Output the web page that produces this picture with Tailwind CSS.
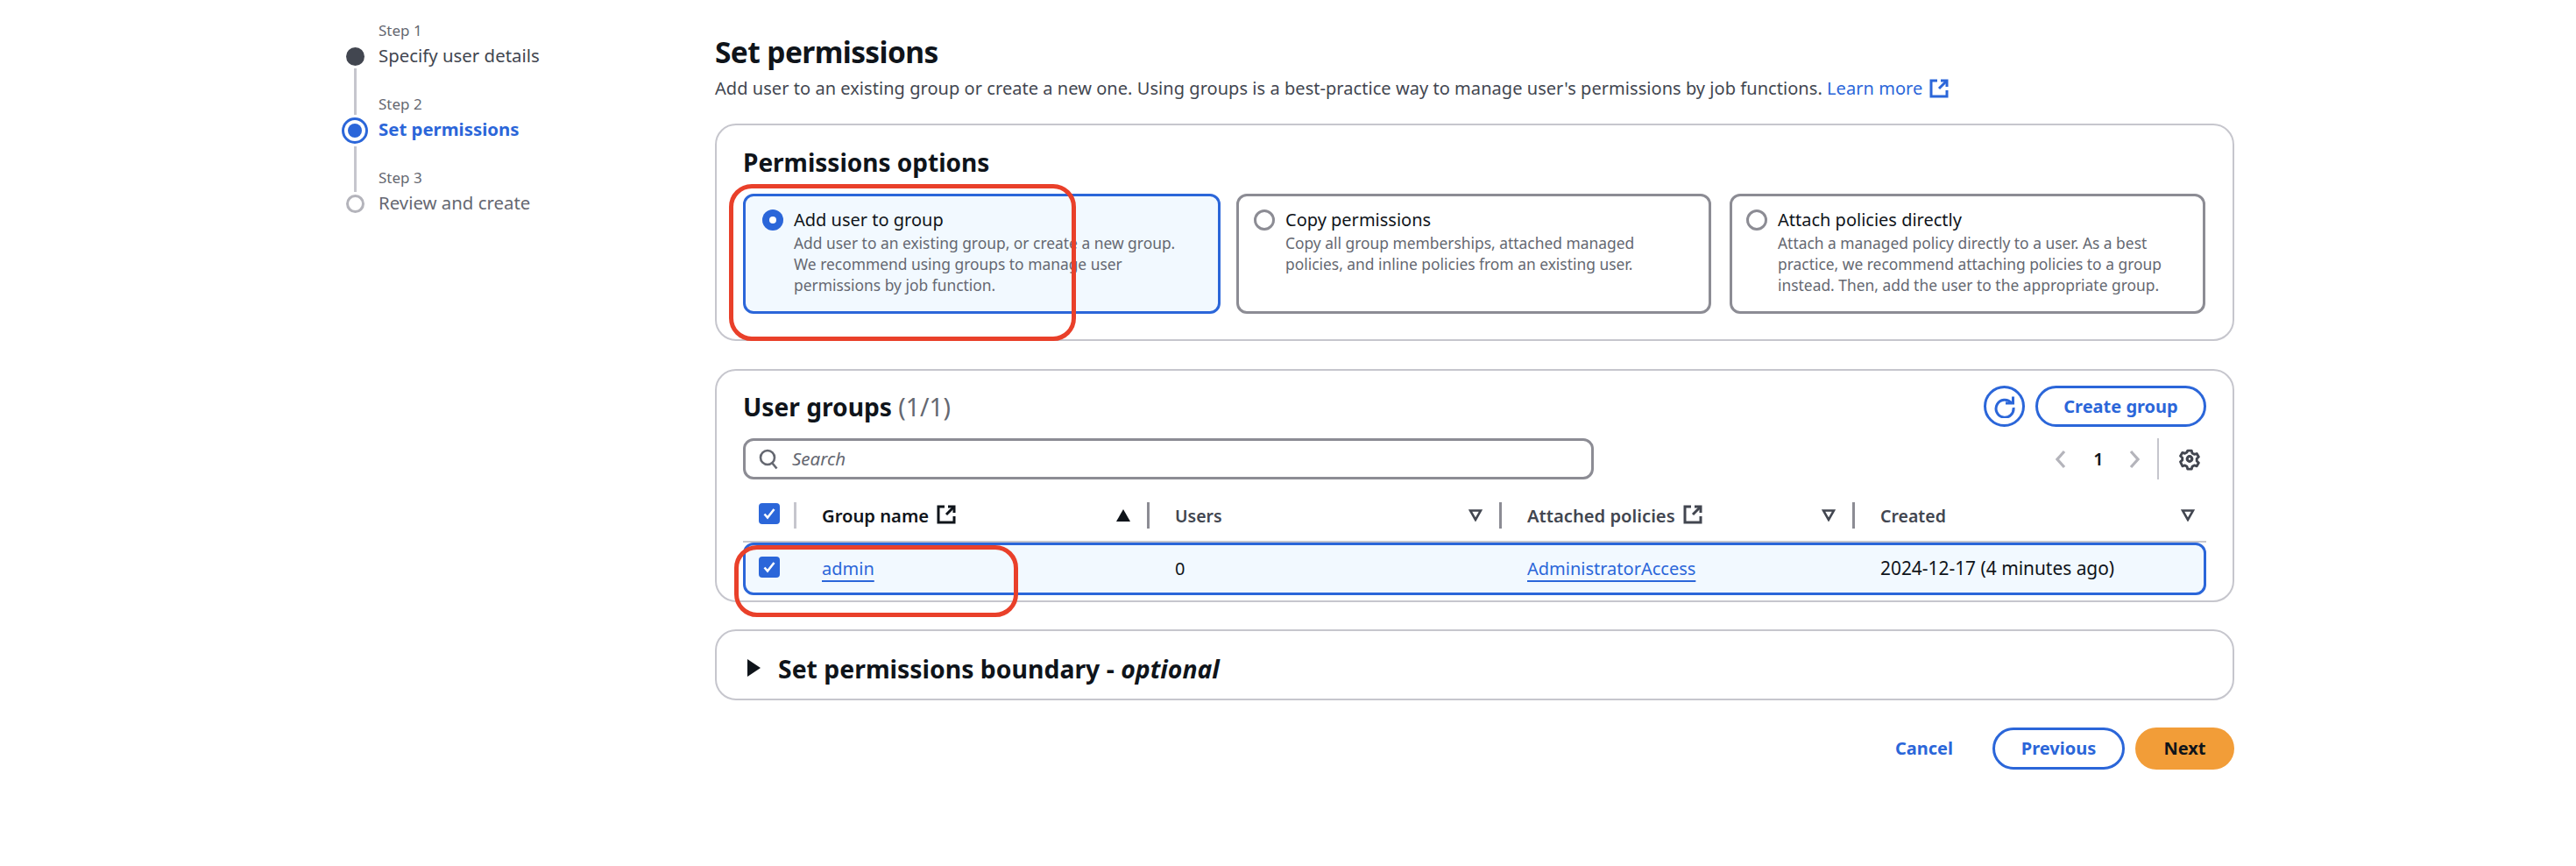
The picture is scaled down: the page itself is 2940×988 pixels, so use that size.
<!DOCTYPE html>
<html>
<head>
<meta charset="utf-8">
<script src="https://cdn.jsdelivr.net/npm/@tailwindcss/browser@4"></script>
</head>
<body class="bg-white">
<div class="relative flex w-[2940px] h-[988px] pl-[390px] bg-white overflow-hidden font-['Noto_Sans',sans-serif] text-[#0f141a]">
  <!-- stepper -->
  <div class="flex w-[426px] shrink-0 gap-[12px]">
    <div class="flex flex-col items-center w-[30px] pt-[54px]">
      <div class="w-[21px] h-[21px] rounded-full bg-[#424650]"></div>
      <div class="w-[3px] h-[53px] my-[3px] bg-[#c6c6cd]"></div>
      <div class="flex items-center justify-center w-[30px] h-[30px] rounded-full border-[3px] border-[#2b66d9]"><div class="w-[16px] h-[16px] rounded-full bg-[#2b66d9]"></div></div>
      <div class="w-[3px] h-[52px] my-[3px] bg-[#c6c6cd]"></div>
      <div class="w-[21px] h-[21px] rounded-full border-[3px] border-[#b4b4bb]"></div>
    </div>
    <div class="pt-[23px]">
      <div class="h-[84px]"><div class="text-[17px] leading-[24px] text-[#656871]">Step 1</div><div class="mt-[2px] text-[20.4px] leading-[28px] text-[#424650]">Specify user details</div></div>
      <div class="h-[84px]"><div class="text-[17px] leading-[24px] text-[#656871]">Step 2</div><div class="mt-[2px] text-[20.4px] leading-[28px] font-bold text-[#2b66d9]">Set permissions</div></div>
      <div class="h-[84px]"><div class="text-[17px] leading-[24px] text-[#656871]">Step 3</div><div class="mt-[2px] text-[20.4px] leading-[28px] text-[#656871]">Review and create</div></div>
    </div>
  </div>
  <!-- main -->
  <div class="w-[1734px] shrink-0 pt-[35px]">
    <h1 class="text-[33.5px] leading-[48px] font-bold tracking-[-0.6px]">Set permissions</h1>
    <p class="mt-[4px] text-[20px] leading-[28px] tracking-[0.05px] text-[#424650]">Add user to an existing group or create a new one. Using groups is a best-practice way to manage user's permissions by job functions. <a class="inline-flex items-center gap-[8px] text-[#2b66d9]">Learn more <svg class="w-[22px] h-[22px]" viewBox="0 0 22 22" fill="none" stroke="currentColor" stroke-width="3"><path d="M9 2H2v18h18v-7"/><path d="M13 2h7v7"/><path d="M20 2l-9 9"/></svg></a></p>

    <section class="mt-[26px] h-[248px] rounded-[24px] border-2 border-[#c6c6cd] px-[30px] pt-[24px]">
      <h2 class="text-[28px] leading-[36px] font-bold">Permissions options</h2>
      <div class="mt-[18px] flex">
        <div class="w-[545px] h-[137px] mr-[18px] rounded-[12px] border-[3px] border-[#2b66d9] bg-[#f2f9ff] flex gap-[12px] pl-[19px] pt-[13px]">
          <div class="mt-[2px] flex items-center justify-center w-[24px] h-[24px] rounded-full bg-[#2b66d9] shrink-0"><div class="w-[8px] h-[8px] rounded-full bg-white"></div></div>
          <div><div class="text-[20px] leading-[28px]">Add user to group</div><div class="text-[17.4px] leading-[24px] text-[#656871]">Add user to an existing group, or create a new group.<br>We recommend using groups to manage user<br>permissions by job function.</div></div>
        </div>
        <div class="w-[542px] h-[137px] mr-[21px] rounded-[12px] border-[3px] border-[#8c8c94] flex gap-[12px] pl-[17px] pt-[13px]">
          <div class="mt-[2px] w-[24px] h-[24px] rounded-full border-[3px] border-[#8c8c94] shrink-0"></div>
          <div><div class="text-[20px] leading-[28px]">Copy permissions</div><div class="text-[17.4px] leading-[24px] text-[#656871]">Copy all group memberships, attached managed<br>policies, and inline policies from an existing user.</div></div>
        </div>
        <div class="w-[543px] h-[137px] rounded-[12px] border-[3px] border-[#8c8c94] flex gap-[12px] pl-[16px] pt-[13px]">
          <div class="mt-[2px] w-[24px] h-[24px] rounded-full border-[3px] border-[#8c8c94] shrink-0"></div>
          <div><div class="text-[20px] leading-[28px]">Attach policies directly</div><div class="text-[17.4px] leading-[24px] text-[#656871]">Attach a managed policy directly to a user. As a best<br>practice, we recommend attaching policies to a group<br>instead. Then, add the user to the appropriate group.</div></div>
        </div>
      </div>
    </section>

    <section class="mt-[32px] h-[266px] rounded-[24px] border-2 border-[#c6c6cd] px-[30px] pt-[17px]">
      <div class="flex items-center justify-between h-[47px]">
        <h2 class="mt-[1px] text-[28.2px] leading-[36px] font-bold">User groups <span class="font-normal text-[#656871]">(1/1)</span></h2>
        <div class="flex items-center gap-[12px]">
          <div class="flex items-center justify-center w-[47px] h-[47px] rounded-full border-[3px] border-[#2b66d9] text-[#2b66d9]">
            <svg class="w-[26px] h-[26px]" viewBox="0 0 26 26" fill="none" stroke="currentColor" stroke-width="3"><path d="M20.5 8.5A10 10 0 1 0 23 14"/><path d="M14 9h8.5V1.5"/></svg>
          </div>
          <div class="flex items-center justify-center w-[195px] h-[47px] rounded-full border-[3px] border-[#2b66d9] text-[20px] font-bold text-[#2b66d9]">Create group</div>
        </div>
      </div>
      <div class="mt-[13px] flex items-center h-[47px]">
        <div class="flex items-center w-[971px] h-[47px] rounded-[12px] border-[3px] border-[#8c8c94] pl-[15px] gap-[16px]">
          <svg class="w-[22px] h-[24px] shrink-0" viewBox="0 0 22 24" fill="none" stroke="#656871" stroke-width="2.6"><circle cx="10" cy="10" r="8"/><path d="M15.5 16.5l5 6"/></svg>
          <span class="text-[20.5px] italic text-[#656871]">Search</span>
        </div>
        <div class="ml-auto flex items-center h-[47px]">
          <svg class="w-[12px] h-[22px] mr-[31px]" viewBox="0 0 12 22" fill="none" stroke="#b4b4bb" stroke-width="3.2"><path d="M10 2L2 11l8 9"/></svg>
          <span class="text-[20px] font-semibold w-[12px] text-center">1</span>
          <svg class="w-[12px] h-[22px] ml-[29px]" viewBox="0 0 12 22" fill="none" stroke="#b4b4bb" stroke-width="3.2"><path d="M2 2l8 9-8 9"/></svg>
          <div class="ml-[20px] w-[2px] h-[47px] bg-[#c6c6cd]"></div>
          <svg class="ml-[23px] mr-[7px] w-[24px] h-[26px]" viewBox="0 0 24 26" fill="none" stroke="#424650" stroke-width="3.2" stroke-linejoin="round"><path d="M9.5 2h5l.8 3.2 2.6 1.5 3.2-.9 2.4 4.2-2.4 2.2v3l2.4 2.2-2.4 4.2-3.2-.9-2.6 1.5-.8 3.2h-5l-.8-3.2-2.6-1.5-3.2.9L.4 16.2l2.4-2.2v-3L.4 8.8l2.4-4.2 3.2.9 2.6-1.5z" transform="translate(1.2 1.3) scale(.9)"/><circle cx="12" cy="12.5" r="2.8"/></svg>
        </div>
      </div>
      <!-- table head -->
      <div class="mt-[26px] grid grid-cols-[58px_403px_402px_403px_1fr] h-[30px] text-[19px] font-semibold text-[#424650]">
        <div class="flex items-center pl-[18px]"><div class="flex items-center justify-center w-[24px] h-[24px] rounded-[4px] bg-[#2b66d9] -mt-[4px]"><svg class="w-[16px] h-[16px]" viewBox="0 0 16 16" fill="none" stroke="#fff" stroke-width="2.6"><path d="M2.5 8.5l3.5 4 7.5-9.5"/></svg></div></div>
        <div class="flex items-center border-l-[3px] border-[#c6c6cd] pl-[29px] pr-[19px]"><span class="text-[20.2px] text-[#0f141a]">Group name</span><svg class="ml-[9px] -mt-[2px] w-[22px] h-[22px] text-[#0f141a]" viewBox="0 0 22 22" fill="none" stroke="currentColor" stroke-width="3"><path d="M9 2H2v18h18v-7"/><path d="M13 2h7v7"/><path d="M20 2l-9 9"/></svg><svg class="ml-auto w-[16px] h-[14px]" viewBox="0 0 16 14"><path d="M8 0l8 14H0z" fill="#0f141a"/></svg></div>
        <div class="flex items-center border-l-[3px] border-[#8c8c94] pl-[29px] pr-[19px]"><span class="text-[19.5px]">Users</span><svg class="ml-auto w-[16px] h-[14px]" viewBox="0 0 16 14" fill="none" stroke="#424650" stroke-width="2.6"><path d="M2 1.5h12L8 12z"/></svg></div>
        <div class="flex items-center border-l-[3px] border-[#8c8c94] pl-[29px] pr-[19px]"><span class="text-[20.2px]">Attached policies</span><svg class="ml-[9px] -mt-[2px] w-[22px] h-[22px]" viewBox="0 0 22 22" fill="none" stroke="currentColor" stroke-width="3"><path d="M9 2H2v18h18v-7"/><path d="M13 2h7v7"/><path d="M20 2l-9 9"/></svg><svg class="ml-auto w-[16px] h-[14px]" viewBox="0 0 16 14" fill="none" stroke="#424650" stroke-width="2.6"><path d="M2 1.5h12L8 12z"/></svg></div>
        <div class="flex items-center border-l-[3px] border-[#8c8c94] pl-[29px] pr-[13px]"><span class="text-[19.5px]">Created</span><svg class="ml-auto w-[16px] h-[14px]" viewBox="0 0 16 14" fill="none" stroke="#424650" stroke-width="2.6"><path d="M2 1.5h12L8 12z"/></svg></div>
      </div>
      <div class="mt-[14px] h-[2px] bg-[#c6c6cd]"></div>
      <!-- row -->
      <div class="grid grid-cols-[55px_403px_402px_403px_1fr] h-[60px] rounded-[12px] border-[3px] border-[#2b66d9] bg-[#f2f9ff] text-[20px]">
        <div class="flex items-center pl-[15px]"><div class="flex items-center justify-center w-[24px] h-[24px] rounded-[4px] bg-[#2b66d9] -mt-[4px]"><svg class="w-[16px] h-[16px]" viewBox="0 0 16 16" fill="none" stroke="#fff" stroke-width="2.6"><path d="M2.5 8.5l3.5 4 7.5-9.5"/></svg></div></div>
        <div class="flex items-center pl-[32px]"><a class="text-[#2b66d9] underline decoration-2 underline-offset-[6px]">admin</a></div>
        <div class="flex items-center pl-[32px]">0</div>
        <div class="flex items-center pl-[32px]"><a class="text-[#2b66d9] underline decoration-2 underline-offset-[6px]">AdministratorAccess</a></div>
        <div class="flex items-center pl-[32px] text-[20.9px]">2024-12-17 (4 minutes ago)</div>
      </div>
    </section>

    <section class="mt-[31px] flex items-center gap-[20px] h-[81px] rounded-[24px] border-2 border-[#c6c6cd] pl-[35px]">
      <svg class="mt-[7px] w-[15px] h-[20px]" viewBox="0 0 15 20"><path d="M0 0l15 10L0 20z" fill="#0f141a"/></svg>
      <h2 class="mt-[9px] text-[28.4px] font-bold">Set permissions boundary - <em>optional</em></h2>
    </section>

    <div class="mt-[31px] flex items-center justify-end">
      <a class="mr-[45px] text-[20px] font-bold text-[#2b66d9]">Cancel</a>
      <div class="flex items-center justify-center w-[151px] h-[48px] rounded-full border-[3px] border-[#2b66d9] text-[20px] font-bold text-[#2b66d9]">Previous</div>
      <div class="ml-[12px] flex items-center justify-center w-[113px] h-[48px] rounded-full bg-[#f29d38] text-[20px] font-bold">Next</div>
    </div>
  </div>
  <!-- annotations -->
  <div class="absolute left-[832px] top-[210px] w-[396px] h-[179px] rounded-[26px] border-[5px] border-[#e9402a]"></div>
  <div class="absolute left-[838px] top-[622px] w-[324px] h-[82px] rounded-[26px] border-[5px] border-[#e9402a]"></div>
</div>
</body>
</html>
